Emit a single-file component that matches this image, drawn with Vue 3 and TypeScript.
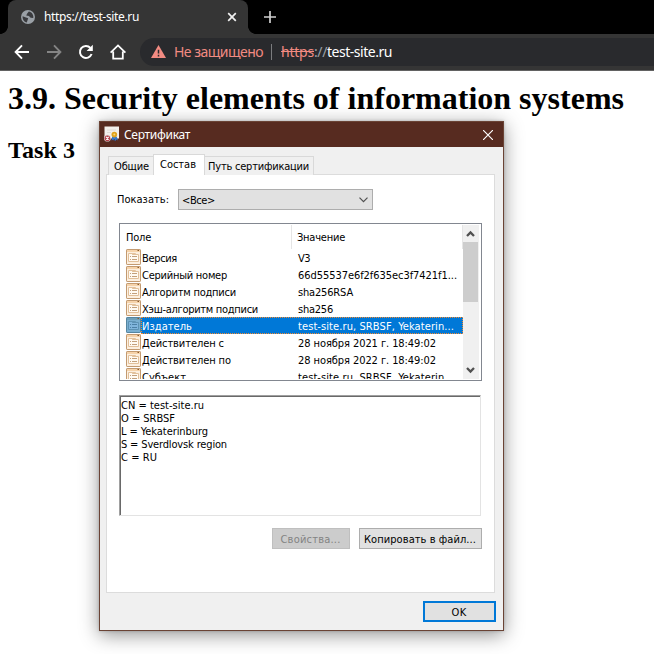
<script setup lang="ts">
interface Field {
  name: string
  nameWidth: number
  value: string
  valueWidth: number
  selected?: boolean
}

const fields: Field[] = [
  { name: 'Версия', nameWidth: 35, value: 'V3', valueWidth: 12 },
  { name: 'Серийный номер', nameWidth: 85, value: '66d55537e6f2f635ec3f7421f1...', valueWidth: 159 },
  { name: 'Алгоритм подписи', nameWidth: 94, value: 'sha256RSA', valueWidth: 55 },
  { name: 'Хэш-алгоритм подписи', nameWidth: 116, value: 'sha256', valueWidth: 35 },
  { name: 'Издатель', nameWidth: 50, value: 'test-site.ru, SRBSF, Yekaterin...', valueWidth: 156, selected: true },
  { name: 'Действителен с', nameWidth: 82, value: '28 ноября 2021 г. 18:49:02', valueWidth: 138 },
  { name: 'Действителен по', nameWidth: 89, value: '28 ноября 2022 г. 18:49:02', valueWidth: 138 },
  { name: 'Субъект', nameWidth: 44, value: 'test-site.ru, SRBSF, Yekaterin...', valueWidth: 156 },
]

const issuer = [
  { text: 'CN = test-site.ru', width: 83 },
  { text: 'O = SRBSF', width: 54 },
  { text: 'L = Yekaterinburg', width: 87 },
  { text: 'S = Sverdlovsk region', width: 106 },
  { text: 'C = RU', width: 36 },
]

// Spreads a label's letters so that it takes up the given width.
const vFit = {
  mounted(el: HTMLElement, binding: { value: number }) {
    const natural = el.getBoundingClientRect().width
    const count = (el.textContent ?? '').length
    el.style.letterSpacing = `${(binding.value - natural) / count}px`
  },
}
</script>

<template>
  <div class="browser">
    <header class="tabstrip">
      <div class="tab">
        <svg class="globe" viewBox="0 0 14 14" width="14" height="14">
          <circle cx="7" cy="7" r="7" fill="#9aa0a6" />
          <path d="M1.6 6.2 L5 7.4 L7.2 8.2 L6.6 10 L5.8 12.4 C3.2 12 1.4 9.6 1.6 6.2 Z M7.8 1.6 L6.2 3.4 L5.2 5.4 L8 6 L9.2 7.6 L11.2 8 L12.4 7.8 C12.6 4.6 10.6 2 7.8 1.6 Z" fill="#3a3b3e" />
        </svg>
        <span class="tab-title"><span v-fit="95">https://test-site.ru</span></span>
        <svg class="tab-close" viewBox="0 0 10 10" width="10" height="10">
          <path d="M1.2 1.2 L8.8 8.8 M8.8 1.2 L1.2 8.8" stroke="#f1f1f1" stroke-width="1.7" />
        </svg>
      </div>
      <svg class="new-tab" viewBox="0 0 12 12" width="12" height="12">
        <path d="M6 0 V12 M0 6 H12" stroke="#cfcfcf" stroke-width="1.7" />
      </svg>
    </header>

    <nav class="toolbar">
      <svg class="nav-icon" viewBox="0 0 16 16" width="16" height="16">
        <path d="M15 8 H2 M8 1.4 L1.6 8 L8 14.6" fill="none" stroke="#fff" stroke-width="1.9" />
      </svg>
      <svg class="nav-icon" viewBox="0 0 16 16" width="16" height="16">
        <path d="M1 8 H14 M8 1.4 L14.4 8 L8 14.6" fill="none" stroke="#858585" stroke-width="1.9" />
      </svg>
      <svg class="nav-icon" viewBox="0 0 16 16" width="16" height="16">
        <path d="M13.6 10 A6 6 0 1 1 12.4 3.9" fill="none" stroke="#fff" stroke-width="2" />
        <path d="M14.8 .8 V7 H8.6 Z" fill="#fff" />
      </svg>
      <svg class="nav-icon" viewBox="0 0 16 16" width="16" height="16">
        <path d="M.6 8.7 L8 1.4 L15.4 8.7 M3.2 7.4 V14.6 H12.8 V7.4" fill="none" stroke="#fff" stroke-width="1.8" />
      </svg>
      <div class="omnibox">
        <svg class="warn" viewBox="0 0 15 13" width="15" height="13">
          <path d="M7.5 0 L15 13 H0 Z" fill="#f28b82" />
          <path d="M7.5 4.8 V8.6 M7.5 9.8 V11.4" stroke="#292a2d" stroke-width="1.5" />
        </svg>
        <span class="insecure"><span v-fit="89">Не защищено</span></span>
        <span class="separator"></span>
        <span class="url"><span v-fit="33" class="scheme">https</span><span v-fit="13" class="slashes">://</span><span v-fit="65">test-site.ru</span></span>
      </div>
    </nav>

    <main class="page">
      <h1><span v-fit="616">3.9. Security elements of information systems</span></h1>
      <h2><span v-fit="67">Task 3</span></h2>
    </main>

    <section class="dialog">
      <div class="titlebar">
        <svg class="cert-icon" viewBox="0 0 16 16" width="16" height="16">
          <rect x=".5" y=".5" width="14.5" height="12" fill="#f3f0ec" />
          <path d="M3 4 H12 M3 6.5 H7" stroke="#e0dcd7" stroke-width="1" />
          <path d="M8.2 10.5 L7.6 14.6 L9.4 13.6 L10.2 15.2 L10.6 12 L11.4 15.2 L12.4 13.6 L14 14.4 L12.6 10.5 Z" fill="#2d76d2" />
          <circle cx="10.3" cy="8.6" r="2.8" fill="#e0a21c" />
          <circle cx="10.3" cy="8.6" r="1" fill="#f6d578" />
          <circle cx="3.4" cy="12.2" r="3.4" fill="#ded5d5" />
          <circle cx="3.4" cy="12.2" r="2.8" fill="#b5404a" />
          <path d="M2.1 10.9 L4.7 13.5 M4.7 10.9 L2.1 13.5" stroke="#fff" stroke-width="1.1" />
        </svg>
        <span class="title"><span v-fit="66">Сертификат</span></span>
        <svg class="close" viewBox="0 0 10 10" width="10" height="10">
          <path d="M0 0 L10 10 M10 0 L0 10" stroke="#fff" stroke-width="1.15" />
        </svg>
      </div>

      <div class="client">
        <div class="tabs">
          <span class="sheet-tab general"><span v-fit="35">Общие</span></span>
          <span class="sheet-tab details"><span v-fit="36">Состав</span></span>
          <span class="sheet-tab path"><span v-fit="101">Путь сертификации</span></span>
        </div>

        <div class="panel">
          <div class="filter">
            <span class="filter-label"><span v-fit="52">Показать:</span></span>
            <div class="combo">
              <span v-fit="33">&lt;Все&gt;</span>
              <svg viewBox="0 0 9 6" width="9" height="6">
                <path d="M.5 .6 L4.5 4.7 L8.5 .6" fill="none" stroke="#505050" stroke-width="1.2" />
              </svg>
            </div>
          </div>

          <div class="list">
            <div class="grid">
              <div class="grid-head">
                <span class="head-name"><span v-fit="25">Поле</span></span>
                <span class="head-value"><span v-fit="48">Значение</span></span>
              </div>
              <div v-for="field in fields" :key="field.name" class="row" :class="{ selected: field.selected }">
                <svg class="field-icon" viewBox="0 0 15 16" width="15" height="16">
                  <rect x=".5" y=".5" width="14" height="15" rx=".6" class="i-frame" />
                  <rect x="1" y="1" width="13" height="2" class="i-bar" />
                  <path d="M2.5 4.5 H6.5 V5.5 H12.5 V12.5 H2.5 Z M6.5 5.5 V4.5 H9.5 V5.5" class="i-card" />
                  <path d="M4 7.5 H5 M6 7.5 H11 M4 10.5 H5 M6 10.5 H11" class="i-line" />
                  <path d="M11.5 1.5 H13" class="i-dot" />
                </svg>
                <div class="cells">
                  <span class="cell-name"><span v-fit="field.nameWidth">{{ field.name }}</span></span>
                  <span class="cell-value"><span v-fit="field.valueWidth">{{ field.value }}</span></span>
                </div>
              </div>
            </div>
            <div class="scrollbar">
              <svg class="arrow" viewBox="0 0 15 17" width="15" height="17">
                <path d="M4 11 L7.5 7.5 L11 11" fill="none" stroke="#505050" stroke-width="2.3" />
              </svg>
              <div class="thumb"></div>
              <svg class="arrow" viewBox="0 0 15 17" width="15" height="17">
                <path d="M4 7 L7.5 10.5 L11 7" fill="none" stroke="#505050" stroke-width="2.3" />
              </svg>
            </div>
          </div>

          <div class="memo">
            <div v-for="line in issuer" :key="line.text"><span v-fit="line.width">{{ line.text }}</span></div>
          </div>

          <div class="actions">
            <span class="button props"><span v-fit="60">Свойства...</span></span>
            <span class="button copy"><span v-fit="112">Копировать в файл...</span></span>
          </div>
        </div>

        <div class="footer"><span class="button ok"><span v-fit="15">OK</span></span></div>
      </div>
    </section>
  </div>
</template>

<style>
html,
body {
  overflow: hidden;
}
</style>

<style scoped>
.browser {
  position: relative;
  width: 654px;
  height: 654px;
  overflow: hidden;
  background: #fff;
  font-family: "Noto Sans", sans-serif;
}
.browser * {
  box-sizing: border-box;
}
span {
  white-space: nowrap;
}
svg {
  display: block;
  flex: none;
}

.tabstrip {
  display: flex;
  align-items: center;
  height: 34px;
  background: #000;
}
.tab {
  position: relative;
  display: flex;
  align-items: center;
  width: 240px;
  height: 34px;
  margin-left: 8px;
  padding: 0 11px 0 13px;
  border-radius: 8px 8px 0 0;
  background: #353535;
}
.tab::before,
.tab::after {
  content: "";
  position: absolute;
  bottom: 0;
  width: 8px;
  height: 8px;
}
.tab::before {
  left: -8px;
  background: radial-gradient(circle at 0 0, #000 7.6px, #353535 8.2px);
}
.tab::after {
  right: -8px;
  background: radial-gradient(circle at 100% 0, #000 7.6px, #353535 8.2px);
}
.tab-title {
  flex: 1;
  margin-left: 9px;
  color: #fff;
  font-size: 12px;
  line-height: 16px;
}
.new-tab {
  margin-left: 16px;
}

.toolbar {
  display: flex;
  align-items: center;
  gap: 16px;
  height: 37px;
  padding: 0 0 1px 14px;
  border-bottom: 1px solid #626262;
  background: #353535;
}
.omnibox {
  display: flex;
  flex: 1;
  align-items: center;
  height: 28px;
  margin-left: -2px;
  padding-left: 11px;
  border-radius: 14px 0 0 14px;
  background: #292a2d;
  font-size: 14px;
  line-height: 20px;
}
.insecure {
  width: 97px;
  margin-left: 8px;
  color: #f28b82;
}
.separator {
  width: 1px;
  height: 16px;
  margin-right: 9px;
  background: #7b7c7e;
}
.url {
  display: flex;
  color: #fff;
}
.scheme {
  color: #f28b82;
  text-decoration: line-through;
}
.slashes {
  color: #9aa0a6;
}

.page {
  padding: 9px 8px 8px;
  color: #000;
  font-family: "Liberation Serif", serif;
}
h1 {
  margin: 0 0 20px;
  font-size: 32px;
  line-height: 37px;
}
h2 {
  margin: 0;
  font-size: 24px;
  line-height: 27px;
}

.dialog {
  position: absolute;
  left: 99px;
  top: 121px;
  display: flex;
  flex-direction: column;
  width: 405px;
  height: 510px;
  border: 1px solid #6a4335;
  background: #f0f0f0;
  box-shadow: 0 4px 18px rgba(0, 0, 0, 0.42), 0 0 3px rgba(0, 0, 0, 0.2);
  color: #000;
  font-family: "DejaVu Sans Condensed", "DejaVu Sans", sans-serif;
  font-size: 11px;
  font-stretch: condensed;
  line-height: 13px;
}
.titlebar {
  display: flex;
  align-items: center;
  height: 25px;
  padding: 0 10px 0 4px;
  background: #572b20;
}
.cert-icon {
  margin-top: -1px;
}
.title {
  flex: 1;
  margin-left: 4px;
  color: #fff;
  font-family: "Noto Sans", sans-serif;
  font-size: 12px;
}
.client {
  flex: 1;
  padding: 7px 8px 0 6px;
}
.tabs {
  display: flex;
  align-items: flex-end;
  height: 21px;
  padding-left: 2px;
}
.sheet-tab {
  display: flex;
  align-items: center;
  height: 19px;
  border: 1px solid #d9d9d9;
  border-bottom: 0;
  background: #f0f0f0;
}
.general {
  width: 45px;
  padding-left: 5px;
  border-right: 0;
}
.details {
  z-index: 1;
  width: 52px;
  height: 21px;
  padding: 0 0 1px 6px;
  background: #fff;
}
.path {
  width: 109px;
  padding-left: 3px;
  border-left: 0;
}
.panel {
  width: 389px;
  height: 419px;
  margin-top: -1px;
  padding: 14px 12px 0;
  border: 1px solid #dcdcdc;
  background: #fff;
}
.filter {
  display: flex;
  align-items: center;
}
.filter-label {
  width: 61px;
  margin-left: -2px;
}
.combo {
  display: flex;
  align-items: center;
  justify-content: space-between;
  width: 195px;
  height: 21px;
  padding: 1px 4px 0 3px;
  border: 1px solid #adadad;
  background: #e1e1e1;
}
.list {
  display: flex;
  width: 363px;
  height: 158px;
  margin-top: 13px;
  padding: 1px 2px 1px 1px;
  border: 1px solid #828790;
}
.grid {
  width: 343px;
  height: 154px;
  overflow: hidden;
}
.grid-head {
  display: flex;
  height: 24px;
  line-height: 25px;
}
.head-name {
  width: 171px;
  padding-left: 5px;
  border-right: 1px solid #e5e5e5;
}
.head-value {
  width: 171px;
  padding-left: 5px;
  border-right: 1px solid #e5e5e5;
}
.row {
  display: flex;
  height: 17px;
  padding-left: 5px;
}
.cells {
  display: flex;
  width: 322px;
  height: 17px;
  line-height: 19px;
}
.cell-name {
  width: 157px;
  padding-left: 1px;
}
.selected .cells {
  outline: 1px dotted #f28a30;
  outline-offset: -1px;
  background: #0078d7;
  color: #fff;
}
.i-frame {
  fill: #fcefdf;
  stroke: #c39a70;
}
.i-bar {
  fill: #f6d3aa;
}
.i-card {
  fill: #fffaf2;
  stroke: #e2c09a;
}
.i-line {
  stroke: #c3a07c;
}
.i-dot {
  stroke: #8a5a2c;
}
.selected .i-frame {
  fill: #7aafd0;
  stroke: #5585a0;
}
.selected .i-bar {
  fill: #6f9fb8;
}
.selected .i-card {
  fill: #80b5dc;
  stroke: #5e93b4;
}
.selected .i-line {
  stroke: #4c80a6;
}
.scrollbar {
  display: flex;
  flex-direction: column;
  width: 16px;
  height: 154px;
  padding-bottom: 1px;
  background: #f0f0f0;
}
.thumb {
  width: 15px;
  height: 60px;
  margin-bottom: auto;
  background: #cdcdcd;
}
.memo {
  width: 362px;
  height: 121px;
  margin-top: 14px;
  padding: 3px 0 0 1px;
  border: 1px solid #a0a0a0;
  border-right-color: #e3e3e3;
  border-bottom-color: #e3e3e3;
  box-shadow: inset 1px 1px 0 #696969;
}
.actions {
  display: flex;
  justify-content: flex-end;
  gap: 9px;
  margin-top: 12px;
}
.button {
  display: flex;
  align-items: center;
  justify-content: center;
  height: 21px;
  padding: 1px 1px 0 0;
  border: 1px solid #adadad;
  background: #e1e1e1;
}
.props {
  width: 78px;
  border-color: #bfbfbf;
  background: #ccc;
  color: #838383;
}
.copy {
  width: 123px;
}
.footer {
  display: flex;
  justify-content: flex-end;
  margin: 8px -1px 0 0;
}
.ok {
  width: 73px;
  border: 2px solid #0078d7;
}
</style>
